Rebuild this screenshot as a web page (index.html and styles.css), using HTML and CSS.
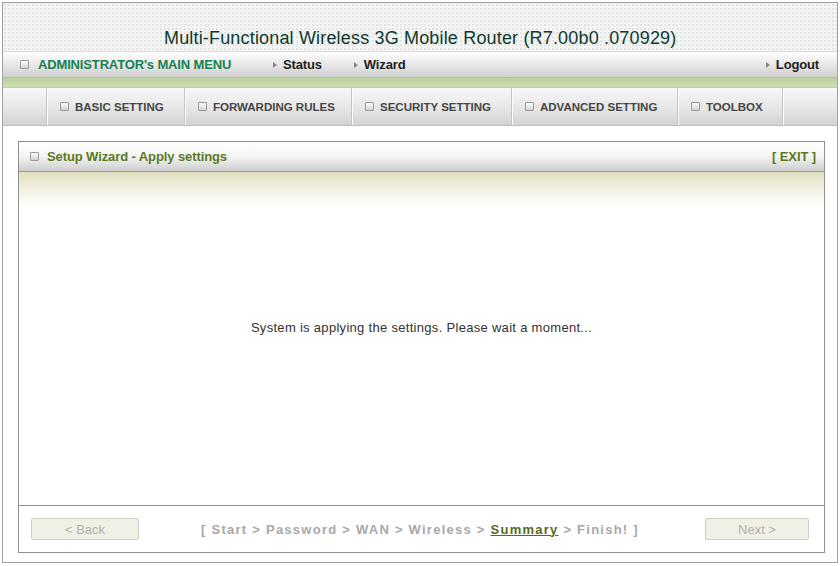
FILE: index.html
```html
<!DOCTYPE html>
<html lang="en">
<head>
    <meta charset="UTF-8">
    <title>Multi-Functional Wireless 3G Mobile Router</title>
    <link rel="stylesheet" href="styles.css">
</head>
<body>
    <div class="frame">
        <div class="title-bar">Multi-Functional Wireless 3G Mobile Router (R7.00b0 .070929)</div>

        <div class="main-menu">
            <span class="bullet"></span>
            <span class="admin">ADMINISTRATOR's MAIN MENU</span>
            <a class="menu-link status">Status</a>
            <a class="menu-link">Wizard</a>
            <a class="menu-link logout">Logout</a>
        </div>
        <div class="green-strip"></div>

        <div class="tabs">
            <div class="tab-spacer"></div>
            <div class="tab w1"><span class="bullet"></span>BASIC SETTING</div>
            <div class="tab w2"><span class="bullet"></span>FORWARDING RULES</div>
            <div class="tab w3"><span class="bullet"></span>SECURITY SETTING</div>
            <div class="tab w4"><span class="bullet"></span>ADVANCED SETTING</div>
            <div class="tab w5"><span class="bullet"></span>TOOLBOX</div>
            <div class="tab-end"></div>
        </div>

        <div class="panel">
            <div class="panel-head">
                <span class="bullet"></span>
                <span class="panel-title">Setup Wizard - Apply settings</span>
                <a class="exit">[ EXIT ]</a>
            </div>
            <div class="panel-body">
                <p class="message">System is applying the settings. Please wait a moment...</p>
            </div>
            <div class="panel-foot">
                <button class="nav-btn" disabled>&lt; Back</button>
                <div class="steps">[ Start &gt; Password &gt; WAN &gt; Wireless &gt; <span class="current">Summary</span> &gt; Finish! ]</div>
                <button class="nav-btn next" disabled>Next &gt;</button>
            </div>
        </div>
    </div>
</body>
</html>
```

FILE: styles.css
```css
body {
    margin: 0;
    padding: 2px;
    background: #fff;
    font-family: "Liberation Sans", Arial, sans-serif;
}
.frame {
    width: 834px;
    height: 559px;
    border: 1px solid #a0a0a0;
    display: flex;
    flex-direction: column;
}
.bullet {
    display: inline-block;
    width: 7px;
    height: 7px;
    border: 1px solid #9a9a9a;
    border-radius: 1px;
    background: linear-gradient(#fdfdfd, #d4d4d4);
    margin-right: 9px;
    flex: none;
}
.title-bar {
    height: 49px;
    box-sizing: border-box;
    padding: 25px 0 0 161px;
    font-size: 18px;
    color: #0e3a2e;
    background-color: #f4f4f4;
    background-image: radial-gradient(#e4e4e4 0.8px, transparent 1px);
    background-size: 4px 4px;
    border-bottom: 1px solid #d8d8d8;
    letter-spacing: 0.17px;
}
.main-menu {
    height: 25px;
    display: flex;
    align-items: center;
    padding-left: 17px;
    font-size: 13px;
    font-weight: bold;
    letter-spacing: -0.15px;
    background: linear-gradient(#ffffff, #eaeaea 45%, #cfcfcf);
    border-bottom: 1px solid #b8b8b8;
}
.admin {
    color: #17804f;
    width: 235px;
}
.menu-link {
    color: #222;
    margin-right: 27px;
}
.status {
    margin-right: 32px;
}
.menu-link::before {
    content: "";
    display: inline-block;
    border-left: 4px solid #888;
    border-top: 3px solid transparent;
    border-bottom: 3px solid transparent;
    margin-right: 6px;
    vertical-align: 1px;
}
.logout {
    margin-left: auto;
    margin-right: 18px;
}
.green-strip {
    height: 9px;
    background: linear-gradient(#b9d09a, #cfdfb6);
    border-bottom: 1px solid #c6c6c6;
}
.tabs {
    height: 37px;
    display: flex;
    background: linear-gradient(#f8f8f8, #e6e6e6 55%, #d2d2d2);
    border-bottom: 1px solid #bdbdbd;
    font-size: 11.5px;
    font-weight: bold;
    color: #464646;
}
.tab-spacer {
    width: 43px;
    border-right: 1px solid #c4c4c4;
    box-shadow: 1px 0 0 #fff;
}
.tab {
    display: flex;
    align-items: center;
    padding-left: 13px;
    box-sizing: border-box;
    border-right: 1px solid #c4c4c4;
    box-shadow: 1px 0 0 #fff;
}
.tab .bullet {
    margin-right: 6px;
}
.w1 { width: 138px; }
.w2 { width: 167px; }
.w3 { width: 160px; }
.w4 { width: 166px; }
.w5 { width: 105px; }
.tab-end {
    flex: 1;
}
.panel {
    margin: 15px 12px 9px 15px;
    flex: 1;
    border: 1px solid #8f8f8f;
    display: flex;
    flex-direction: column;
}
.panel-head {
    height: 29px;
    display: flex;
    align-items: center;
    padding-left: 11px;
    padding-right: 8px;
    font-size: 13px;
    font-weight: bold;
    letter-spacing: -0.1px;
    background: linear-gradient(#ffffff, #f4f4f4 50%, #cdcdcd);
    border-bottom: 1px solid #9a9a9a;
}
.panel-head .bullet {
    margin-right: 8px;
}
.panel-title {
    color: #5a7a1e;
}
.exit {
    margin-left: auto;
    color: #5a7a1e;
}
.panel-body {
    flex: 1;
    display: flex;
    align-items: center;
    justify-content: center;
    background: linear-gradient(#e2dfc0, #ffffff 34px);
    padding-bottom: 22px;
}
.message {
    margin: 0;
    font-size: 13px;
    letter-spacing: 0.3px;
    color: #333;
}
.panel-foot {
    height: 46px;
    border-top: 1px solid #8f8f8f;
    display: flex;
    align-items: center;
    padding: 0 15px 0 12px;
}
.nav-btn {
    width: 108px;
    height: 22px;
    background: #f1f0e6;
    border: 1px solid #cfcfc4;
    border-radius: 2px;
    color: #b0b0b0;
    font-family: "Liberation Sans", Arial, sans-serif;
    font-size: 13px;
    padding: 0;
}
.next {
    width: 104px;
}
.steps {
    flex: 1;
    text-align: center;
    font-size: 13px;
    font-weight: bold;
    color: #a8a8a8;
    letter-spacing: 1.25px;
    padding-right: 4px;
}
.current {
    color: #556b22;
    text-decoration: underline;
}
```
